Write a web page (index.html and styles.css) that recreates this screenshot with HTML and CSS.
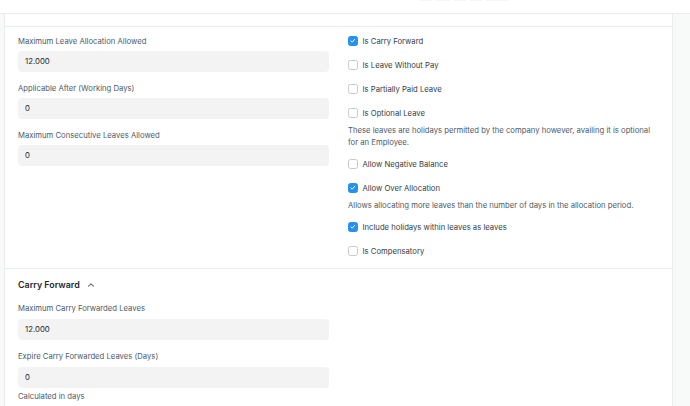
FILE: index.html
```html
<!DOCTYPE html>
<html>
<head>
<meta charset="utf-8">
<link rel="stylesheet" href="styles.css">
</head>
<body>
<div class="topbar">
  <span class="tb-btn w11"></span>
  <span class="tb-btn w12"></span>
  <span class="tb-btn w11"></span>
  <span class="tb-btn w12"></span>
  <span class="tb-btn w20"></span>
</div>
<div class="page">
  <div class="card">
    <div class="section prev"></div>
    <div class="section grid">
      <div class="col left">
        <div class="field">
          <div class="label">Maximum Leave Allocation Allowed</div>
          <div class="input">12.000</div>
        </div>
        <div class="field">
          <div class="label">Applicable After (Working Days)</div>
          <div class="input">0</div>
        </div>
        <div class="field">
          <div class="label">Maximum Consecutive Leaves Allowed</div>
          <div class="input">0</div>
        </div>
      </div>
      <div class="col right">
        <div class="check"><span class="box on"><svg viewBox="0 0 10 10"><path d="M2.6 5.2 L4.3 6.9 L7.5 3.2"/></svg></span>Is Carry Forward</div>
        <div class="check"><span class="box"></span>Is Leave Without Pay</div>
        <div class="check"><span class="box"></span>Is Partially Paid Leave</div>
        <div class="check"><span class="box"></span>Is Optional Leave</div>
        <div class="desc">These leaves are holidays permitted by the company however, availing it is optional for an Employee.</div>
        <div class="check"><span class="box"></span>Allow Negative Balance</div>
        <div class="check"><span class="box on"><svg viewBox="0 0 10 10"><path d="M2.6 5.2 L4.3 6.9 L7.5 3.2"/></svg></span>Allow Over Allocation</div>
        <div class="desc">Allows allocating more leaves than the number of days in the allocation period.</div>
        <div class="check"><span class="box on"><svg viewBox="0 0 10 10"><path d="M2.6 5.2 L4.3 6.9 L7.5 3.2"/></svg></span>Include holidays within leaves as leaves</div>
        <div class="check"><span class="box"></span>Is Compensatory</div>
      </div>
    </div>
    <div class="section cf">
      <div class="sec-head">Carry Forward <svg class="chev" viewBox="0 0 10 10"><path d="M2.5 6.2 L5 3.8 L7.5 6.2"/></svg></div>
      <div class="col half">
        <div class="field">
          <div class="label">Maximum Carry Forwarded Leaves</div>
          <div class="input">12.000</div>
        </div>
        <div class="field">
          <div class="label">Expire Carry Forwarded Leaves (Days)</div>
          <div class="input">0</div>
          <div class="help">Calculated in days</div>
        </div>
      </div>
    </div>
  </div>
</div>
</body>
</html>
```

FILE: styles.css
```css
* { box-sizing: border-box; }
html, body { margin: 0; padding: 0; }
body {
  font-family: Inter, "Noto Sans", sans-serif;
  background: #f8f9f9;
  color: #1f272e;
  width: 690px;
  height: 406px;
  overflow: hidden;
}
.topbar {
  height: 14px;
  background: #ffffff;
  border-bottom: 1px solid #ebeced;
  display: flex;
  justify-content: flex-end;
  align-items: flex-start;
  gap: 5px;
  padding-right: 183px;
}
.tb-btn {
  height: 1px;
  background: #f3f4f5;
}
.w11 { width: 11px; }
.w12 { width: 12px; }
.w20 { width: 20px; }
.page {
  display: flex;
  padding: 0 17px 0 4px;
  height: 392px;
}
.card {
  flex: 1;
  background: #ffffff;
  border-left: 1px solid #ebeced;
  border-right: 1px solid #ebeced;
}
.section { border-bottom: 1px solid #ebeced; padding: 0 13px; }
.section.prev { height: 13px; }
.section.grid {
  display: grid;
  grid-template-columns: 311px 311px;
  column-gap: 19px;
  padding-top: 2px;
  padding-bottom: 5px;
}
.col.left { padding-top: 7px; }
.field { margin-bottom: 11px; }
.label {
  font-size: 7.7px;
  line-height: 12px;
  color: #4c5a67;
  margin-bottom: 3px;
}
.input {
  height: 21px;
  background: #f3f3f3;
  border-radius: 4px;
  font-size: 7.8px;
  line-height: 21px;
  padding-left: 7px;
  color: #1f272e;
}
.check {
  height: 24px;
  display: flex;
  align-items: center;
  font-size: 7.7px;
  color: #333c44;
}
.box {
  width: 9.5px;
  height: 9.5px;
  border: 1px solid #c4cad0;
  border-radius: 2.5px;
  margin-right: 5px;
  background: #fff;
  display: inline-flex;
}
.box.on {
  background: #2490ef;
  border-color: #2490ef;
}
.box svg { width: 100%; height: 100%; }
.box svg path {
  fill: none;
  stroke: #ffffff;
  stroke-width: 1.3;
  stroke-linecap: round;
  stroke-linejoin: round;
}
.desc {
  font-size: 7.7px;
  line-height: 12px;
  color: #4c5a67;
  margin-bottom: 3px;
}
.section.cf { padding-top: 9px; border-bottom: none; }
.section.cf .label { margin-bottom: 4px; }
.sec-head {
  font-size: 8.9px;
  font-weight: 600;
  line-height: 14px;
  color: #1f272e;
  display: flex;
  align-items: center;
  margin-bottom: 11px;
}
.chev { width: 10px; height: 10px; margin-left: 6px; }
.chev path {
  fill: none;
  stroke: #6b7680;
  stroke-width: 1.1;
  stroke-linecap: round;
  stroke-linejoin: round;
}
.col.half { width: 311px; }
.help {
  font-size: 7.7px;
  line-height: 12px;
  color: #4c5a67;
  margin-top: 3px;
}
```
